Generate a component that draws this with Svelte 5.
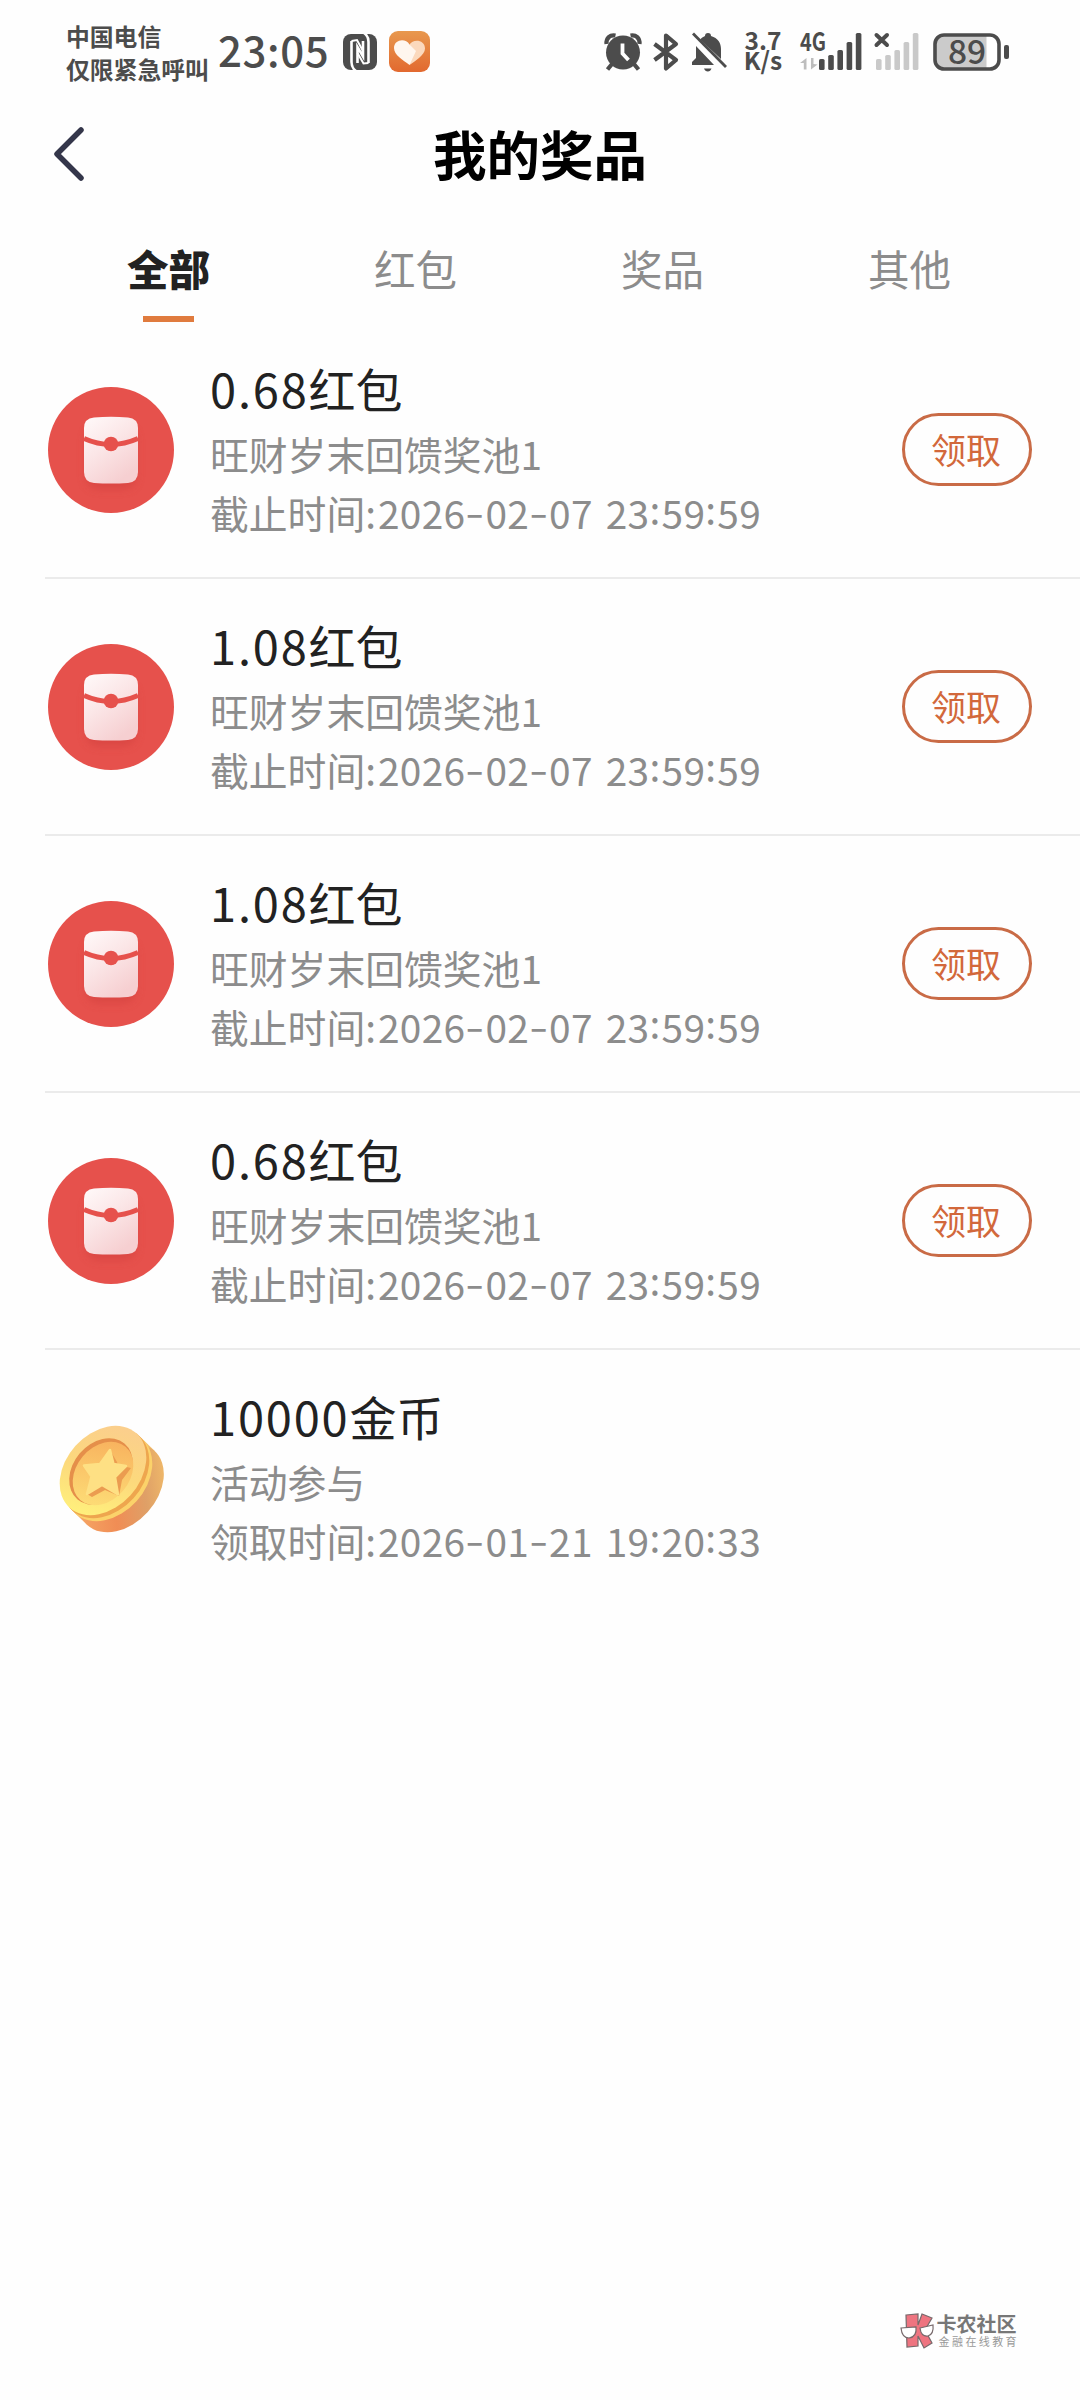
<script lang="ts">
  interface Prize {
    id: number;
    kind: "packet" | "coin";
    amount: string;
    unit: string;
    source: string;
    label: string;
    time: string;
    claimable: boolean;
  }

  const tabs = ["全部", "红包", "奖品", "其他"];
  let active = $state(0);

  const packet = (id: number, amount: string): Prize => ({
    id,
    kind: "packet",
    amount,
    unit: "红包",
    source: "旺财岁末回馈奖池1",
    label: "截止时间",
    time: "2026-02-07 23:59:59",
    claimable: true,
  });

  const prizes: Prize[] = [
    packet(1, "0.68"),
    packet(2, "1.08"),
    packet(3, "1.08"),
    packet(4, "0.68"),
    {
      id: 5,
      kind: "coin",
      amount: "10000",
      unit: "金币",
      source: "活动参与",
      label: "领取时间",
      time: "2026-01-21 19:20:33",
      claimable: false,
    },
  ];

  // Signal bar heights, left to right
  const BARS = [11, 15, 20, 28, 37];
</script>

{#snippet signal(color: string)}
  {#each BARS as h, i (i)}
    <rect x={19 + i * 9.2} y={38 - h} width="5.6" height={h} rx="1.6" fill={color} />
  {/each}
{/snippet}

<div class="page">
  <div class="status">
    <div class="carrier">
      <span>中国电信</span>
      <span>仅限紧急呼叫</span>
    </div>
    <span class="clock">23:05</span>
    <svg class="nfc" width="34" height="36" viewBox="0 0 34 36">
      <rect width="34" height="36" rx="8" fill="#4c4c4c" />
      <path d="M13 37Q8.500 34 8.500 28V7M21 -1Q25.500 2 25.500 8V29" fill="none" stroke="#fff" stroke-width="2.600" />
      <path d="M14.500 29V13L20 22.500V7" fill="none" stroke="#fff" stroke-width="2.600" />
      <path d="M8.500 7L14 6L20 17M14.500 19L20.500 29.500L25.500 29" fill="none" stroke="#fff" stroke-width="2" />
    </svg>
    <svg class="heart" width="41" height="41" viewBox="0 0 41 41">
      <defs>
        <linearGradient id="heart-bg" x1="0" y1="0" x2="0" y2="1">
          <stop offset="0" stop-color="#e8984e" />
          <stop offset="1" stop-color="#e2692f" />
        </linearGradient>
      </defs>
      <rect width="41" height="41" rx="9" fill="url(#heart-bg)" />
      <path d="M20.500 13.500C24 7.500 36 8.500 36 17.500C36 24 26 30 20.500 34Z" fill="#fbd9bd" />
      <path d="M20.500 34C14 29 5 24 5 17C5 8.500 16.500 6.500 20.500 13.500L27 20L20.500 34Z" fill="#fff6ee" />
    </svg>

    <div class="indicators">
      <svg class="alarm" width="38" height="38" viewBox="0 0 38 38">
        <path d="M2.500 11C2 5 6 1.500 11.500 2.500M35.500 11C36 5 32 1.500 26.500 2.500M8 31L3.500 36.500M30 31L34.500 36.500" fill="none" stroke="#4c4c4c" stroke-width="4.200" />
        <circle cx="19" cy="19.500" r="17" fill="#4c4c4c" />
        <path d="M18.500 10.500V20.500L24.500 27" fill="none" stroke="#fff" stroke-width="3.800" />
      </svg>
      <svg class="bluetooth" width="26" height="38" viewBox="0 0 26 38">
        <path d="M1.500 11L23 27L13 35.500V2.500L23 11L1.500 27" fill="none" stroke="#4c4c4c" stroke-width="4.200" stroke-linejoin="round" />
      </svg>
      <svg class="muted" width="36" height="40" viewBox="0 0 36 40">
        <path d="M1 33V30L5 26V14L23 33Z" fill="#4c4c4c" />
        <path d="M9 7.500Q11 5 14 4Q14 1 17 1T20 4C27 6 30 11 30 17V27Z" fill="#4c4c4c" />
        <path d="M2 1.500L35 35" stroke="#4c4c4c" stroke-width="2.800" />
        <path d="M13 36.500H20.500Q19.500 39.500 16.800 39.500T13 36.500Z" fill="#4c4c4c" />
      </svg>
      <div class="speed">
        <span>3.7</span>
        <span>K/s</span>
      </div>
      <svg class="cell" width="62" height="40" viewBox="0 0 62 40">
        <text x="0" y="19" class="net" textLength="26" lengthAdjust="spacingAndGlyphs">4G</text>
        <path d="M0 31L6.500 26V37.500H3.800V31ZM17.500 32.500L11 37.500V26H13.500V32Z" fill="#bdbdbd" />
        {@render signal("#4c4c4c")}
      </svg>
      <svg class="cell" width="62" height="40" viewBox="0 0 62 40">
        <path d="M19.500 3L30 13M30 3L19.500 13" stroke="#4c4c4c" stroke-width="4" stroke-linecap="round" />
        {@render signal("#c9c9c9")}
      </svg>
      <svg class="battery" width="77" height="38" viewBox="0 0 77 38">
        <rect x="2" y="2" width="64" height="34" rx="9" fill="#fff" />
        <path d="M11 2H53.500V36H11Q2 36 2 27V11Q2 2 11 2Z" fill="#cbcbcb" />
        <rect x="2" y="2" width="64" height="34" rx="9" fill="none" stroke="#4c4c4c" stroke-width="3.600" />
        <rect x="71" y="12" width="5" height="14" rx="2" fill="#4c4c4c" />
        <text x="34" y="31" text-anchor="middle" class="level">89</text>
      </svg>
    </div>
  </div>

  <header>
    <svg class="back" width="34" height="58" viewBox="0 0 34 58">
      <path d="M29 5L5 29L29 53" fill="none" stroke="#34364a" stroke-width="5.500" stroke-linecap="round" stroke-linejoin="round" />
    </svg>
    <h1>我的奖品</h1>
  </header>

  <nav>
    {#each tabs as tab, i (tab)}
      <button class="tab" class:active={active === i} onclick={() => (active = i)}>
        <span>{tab}</span>
      </button>
    {/each}
  </nav>

  <ul>
    {#each prizes as prize (prize.id)}
      <li>
        {#if prize.kind === "packet"}
          <svg class="icon" width="126" height="126" viewBox="0 0 126 126">
            <defs>
              <linearGradient id="paper" x1="0" y1="0" x2="0.6" y2="1">
                <stop offset="0" stop-color="#fffafa" />
                <stop offset="0.5" stop-color="#fbe6e7" />
                <stop offset="1" stop-color="#f6cfd1" />
              </linearGradient>
              <filter id="drop" x="-30%" y="-30%" width="160%" height="160%">
                <feGaussianBlur stdDeviation="4" />
              </filter>
            </defs>
            <circle cx="63" cy="63" r="63" fill="#e6514c" />
            <rect x="38" y="40" width="50" height="62" rx="12" fill="#cf3d3a" opacity="0.5" filter="url(#drop)" />
            <path d="M46 30.500Q63 29 80 30.500Q90 31.500 90 41V85Q90 95 80 96Q63 97 46 96Q36 95 36 85V41Q36 31.500 46 30.500Z" fill="url(#paper)" />
            <path d="M36 51.500Q63 63.500 90 51.500" fill="none" stroke="#e6514c" stroke-width="5" />
            <circle cx="63" cy="57" r="7.300" fill="#e6514c" />
          </svg>
        {:else}
          <svg class="icon" width="126" height="126" viewBox="0 0 126 126">
            <defs>
              <linearGradient id="edge" gradientUnits="userSpaceOnUse" x1="106" y1="28" x2="36" y2="108">
                <stop offset="0" stop-color="#f6c36a" />
                <stop offset="0.3" stop-color="#dfa067" />
                <stop offset="0.6" stop-color="#f08d55" />
                <stop offset="1" stop-color="#f6a866" />
              </linearGradient>
              <linearGradient id="face" gradientUnits="userSpaceOnUse" x1="35" y1="15" x2="75" y2="100">
                <stop offset="0" stop-color="#fbcf8c" />
                <stop offset="0.5" stop-color="#fcd97c" />
                <stop offset="1" stop-color="#fff07c" />
              </linearGradient>
              <linearGradient id="well" gradientUnits="userSpaceOnUse" x1="35" y1="30" x2="72" y2="88">
                <stop offset="0" stop-color="#f8b25e" />
                <stop offset="1" stop-color="#fddc76" />
              </linearGradient>
            </defs>
            <g fill="url(#edge)">
              <path d="M88.500 18.300L106.500 35.800L39.500 110.200L21.500 92.700Z" />
              <ellipse cx="73" cy="73" rx="36" ry="50" transform="rotate(42 73 73)" />
            </g>
            <ellipse cx="61" cy="61.500" rx="37" ry="50" transform="rotate(42 61 61.500)" fill="#fbd26a" />
            <ellipse cx="58" cy="58.500" rx="37" ry="50" transform="rotate(42 58 58.500)" fill="#eea64e" />
            <ellipse cx="55" cy="55.500" rx="37" ry="50" transform="rotate(42 55 55.500)" fill="url(#face)" />
            <ellipse cx="53" cy="56.500" rx="28" ry="36.500" transform="rotate(40 53 56.500)" fill="#e58f4a" />
            <ellipse cx="55" cy="58.500" rx="26.500" ry="35" transform="rotate(40 55 58.500)" fill="url(#well)" />
            <path d="M62 35L69 47L70 50L83 53L74 65L71 81L57 75L44 82L39 79L50 60Z" fill="#eb9c50" />
            <path d="M62 35L65.500 49L78 51L67 62L70 79.500L54 70L39 79L43.500 61.500L36 50.500L52 49Z" fill="#fee084" stroke="#fee084" stroke-width="2.500" stroke-linejoin="round" />
          </svg>
        {/if}
        <div class="info">
          <h2><span class="amount">{prize.amount}</span>{prize.unit}</h2>
          <p>{prize.source}</p>
          <p>
            {prize.label}<span class="sep">:</span><span class="time">{#each prize.time as ch, i (i)}{#if ch === "-"}<span class="dash">-</span>{:else if ch === ":"}<span class="colon">:</span>{:else}{ch}{/if}{/each}</span>
          </p>
        </div>
        {#if prize.claimable}
          <button class="claim">领取</button>
        {/if}
      </li>
    {/each}
  </ul>

  <footer>
    <svg width="34" height="36" viewBox="0 0 34 36">
      <g fill="#ee7480" stroke="#77696b" stroke-width="1.200">
        <path d="M6 2L18 1V12L22 1L32 5L25 17L32 30L24 35L18 23V33L7 34Z" />
        <path d="M1 15L16 14Q17 24 9 25Q2 25 1 15Z" fill="#fff" />
        <path d="M20 15L33 12Q34 21 28 23Q21 24 20 15Z" fill="#fff" />
      </g>
    </svg>
    <div class="brand">
      <strong>卡农社区</strong>
      <span>金融在线教育</span>
    </div>
  </footer>
</div>

<style>
  :global(body) {
    margin: 0;
    background: #fefefe;
  }

  .page {
    display: flex;
    flex-direction: column;
    width: 1080px;
    height: 2400px;
    overflow: hidden;
    background: #fefefe;
    color: #222;
    font-family: "Noto Sans CJK SC", sans-serif;
  }

  button {
    padding: 0;
    border: 0;
    background: none;
    font-family: inherit;
  }

  svg {
    display: block;
    flex: none;
    overflow: visible;
  }

  .nfc {
    overflow: hidden;
  }

  /* Status bar */
  .status {
    display: flex;
    align-items: center;
    box-sizing: border-box;
    height: 103px;
    padding: 0 70px 0 66px;
    color: #4c4c4c;
  }

  .carrier {
    display: flex;
    flex-direction: column;
    width: 152px;
    margin-top: 1px;
    font-size: 23.8px;
    font-weight: 700;
    line-height: 33px;
    white-space: nowrap;
  }

  .clock {
    width: 125px;
    margin-bottom: 6px;
    font-size: 42px;
    font-weight: 500;
    line-height: 60px;
    letter-spacing: 0.6px;
  }

  .heart {
    margin-left: 12px;
  }

  .indicators {
    display: flex;
    align-items: center;
    margin-left: auto;
  }

  .bluetooth {
    margin-left: 11px;
  }

  .muted {
    margin-left: 12px;
  }

  .speed {
    display: flex;
    flex-direction: column;
    align-items: center;
    width: 38px;
    margin: 0 18px 3px 17px;
    font-size: 24.5px;
    font-weight: 700;
    line-height: 20px;
    white-space: nowrap;
  }

  .cell + .cell {
    margin-left: -5px;
  }

  .battery {
    margin-left: 14px;
  }

  .net {
    fill: #4c4c4c;
    font-size: 25px;
    font-weight: 700;
  }

  .level {
    fill: #4c4c4c;
    font-size: 33.5px;
    font-weight: 500;
  }

  /* Title bar */
  header {
    display: grid;
    grid-template-columns: 100px 1fr 100px;
    align-items: center;
    height: 102px;
  }

  .back {
    margin-left: 52px;
  }

  h1 {
    margin: 0 0 2px;
    color: #000;
    font-size: 53.5px;
    font-weight: 700;
    line-height: 80px;
    text-align: center;
  }

  /* Tabs */
  nav {
    display: flex;
    height: 117px;
    padding: 0 47px 0 45px;
  }

  .tab {
    display: flex;
    flex: 1;
    flex-direction: column;
    align-items: center;
    justify-content: space-between;
    padding-top: 32px;
    color: #8c8c8c;
    font-size: 41.5px;
    line-height: 62px;
  }

  .tab.active {
    color: #222;
    font-weight: 900;
  }

  .tab.active::after {
    width: 51px;
    height: 6px;
    background: #e07b3e;
    content: "";
  }

  /* Prize list */
  ul {
    margin: 0 0 0 45px;
    padding: 0;
    list-style: none;
  }

  li {
    display: flex;
    align-items: center;
    box-sizing: border-box;
    height: 257px;
    padding: 0 48px 0 3px;
    border-bottom: 2px solid #ebebeb;
  }

  li:last-child {
    border-color: transparent;
  }

  .info {
    flex: 1;
    margin: 0 0 3px 36px;
    white-space: nowrap;
  }

  h2 {
    margin: 0 0 3px;
    font-size: 47px;
    font-weight: 400;
    line-height: 67px;
  }

  .amount {
    letter-spacing: 1.8px;
  }

  p {
    margin: 0;
    color: #8c8c8c;
    font-size: 38.8px;
    line-height: 59px;
  }

  .sep {
    margin-right: 2px;
  }

  .time {
    letter-spacing: 0.3px;
    word-spacing: 4px;
  }

  .dash {
    display: inline-block;
    width: 20px;
    text-align: center;
    transform: translateY(-2px) scaleX(1.4);
  }

  .colon {
    position: relative;
    top: -4px;
    margin-right: 1px;
  }

  .claim {
    box-sizing: border-box;
    width: 130px;
    height: 73px;
    padding: 0 2px 2px 0;
    border: 3px solid #c96b46;
    border-radius: 37px;
    color: #d2683b;
    font-size: 35px;
    line-height: 60px;
  }

  /* Community mark */
  footer {
    display: flex;
    align-items: center;
    gap: 3px;
    margin: auto 61px 51px auto;
  }

  .brand {
    display: flex;
    flex-direction: column;
    color: #777;
    white-space: nowrap;
  }

  .brand strong {
    font-size: 20px;
    font-weight: 700;
    line-height: 21px;
  }

  .brand span {
    margin-left: 2px;
    color: #999;
    font-size: 11px;
    letter-spacing: 2.4px;
    line-height: 15px;
  }
</style>
